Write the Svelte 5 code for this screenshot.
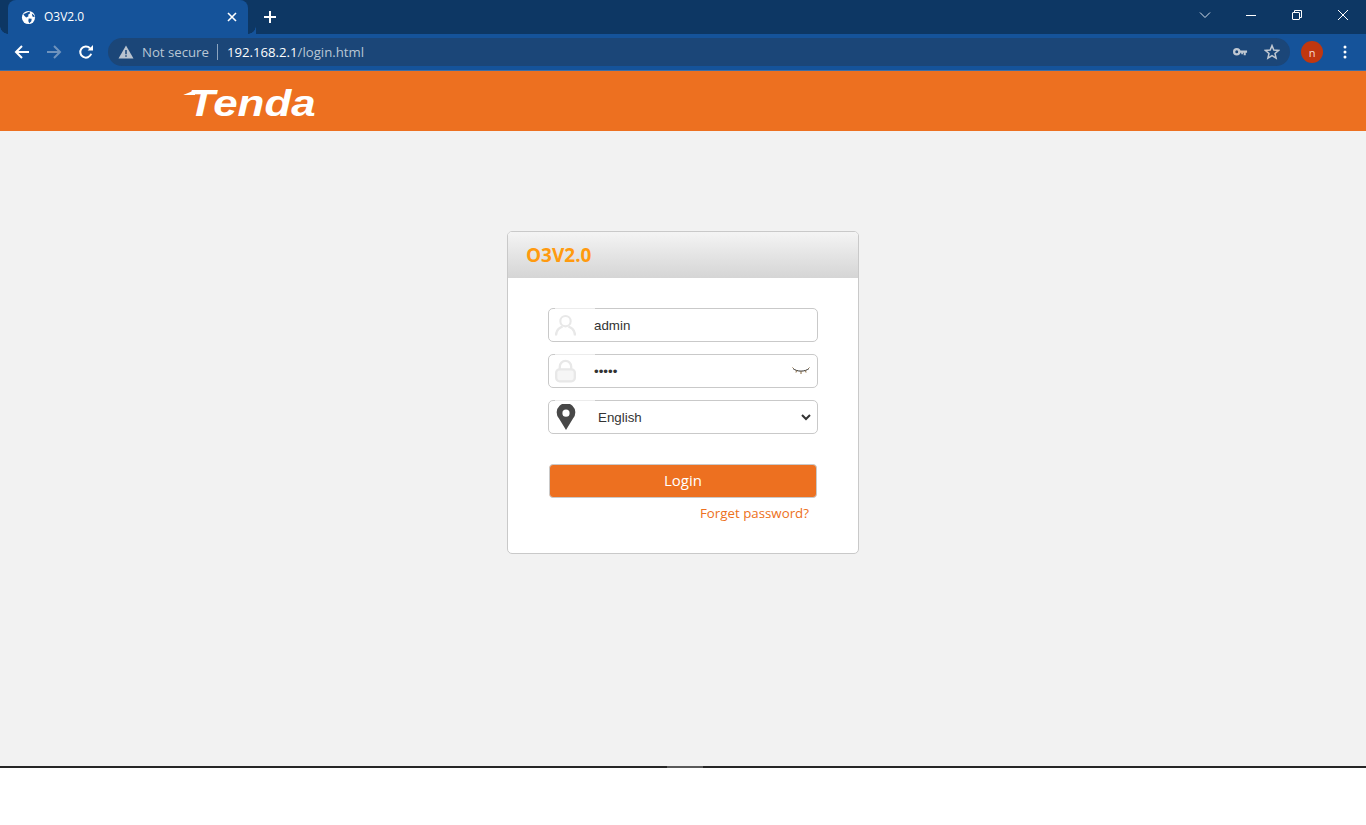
<script>
	let username = 'admin';
	let password = 'admin';
	let language = 'en';
</script>

<div class="page">
	<!-- browser chrome -->
	<div class="tabstrip">
		<div class="tab">
			<svg class="favicon" viewBox="0 0 16 16" width="16" height="16">
				<circle cx="8" cy="8" r="7" fill="#fff" />
				<path d="M2.5 4.5 L6 3 L9 1.6 L9.8 3.4 L7.6 5 L8 6.6 L5.6 8 L3.8 6.4 Z M8.2 9 L11.4 9.4 L11 12 L8.8 14.2 L7.8 11.6 Z M11.5 3.6 L14 5.6 L14.6 7.6 L12.2 6.8 Z" fill="#15539a" />
			</svg>
			<span class="tab-title">O3V2.0</span>
			<svg class="tab-close" viewBox="0 0 10 10" width="10" height="10">
				<path d="M1 1 L9 9 M9 1 L1 9" stroke="#fff" stroke-width="1.6" />
			</svg>
		</div>
		<svg class="new-tab" viewBox="0 0 12 12" width="12" height="12">
			<path d="M6 0 V12 M0 6 H12" stroke="#fff" stroke-width="2" />
		</svg>
		<div class="win-controls">
			<span class="win-btn">
				<svg viewBox="0 0 12 8" width="12" height="8"><path d="M1 1.5 L6 6.5 L11 1.5" fill="none" stroke="#d5dfea" stroke-width="1" /></svg>
			</span>
			<span class="win-btn">
				<svg viewBox="0 0 10 10" width="10" height="10"><path d="M0 5.5 H10" stroke="#fff" stroke-width="1" /></svg>
			</span>
			<span class="win-btn">
				<svg viewBox="0 0 10 10" width="10" height="10">
					<path d="M2.5 2.5 V0.5 H9.5 V7.5 H7.5" fill="none" stroke="#fff" stroke-width="1" />
					<rect x="0.5" y="2.5" width="7" height="7" rx="0.5" fill="none" stroke="#fff" stroke-width="1" />
				</svg>
			</span>
			<span class="win-btn">
				<svg viewBox="0 0 10 10" width="10" height="10"><path d="M0 0 L10 10 M10 0 L0 10" stroke="#fff" stroke-width="1" /></svg>
			</span>
		</div>
	</div>

	<div class="toolbar">
		<span class="nav-btn">
			<svg viewBox="0 0 16 16" width="16" height="16"><path d="M15 8 H2 M8 2 L2 8 L8 14" fill="none" stroke="#fff" stroke-width="2" /></svg>
		</span>
		<span class="nav-btn">
			<svg viewBox="0 0 16 16" width="16" height="16"><path d="M1 8 H14 M8 2 L14 8 L8 14" fill="none" stroke="#6f93bd" stroke-width="2" /></svg>
		</span>
		<span class="nav-btn">
			<svg viewBox="0 0 16 16" width="16" height="16">
				<path d="M13.2 9.8 A5.6 5.6 0 1 1 12 4.2" fill="none" stroke="#fff" stroke-width="2" />
				<path d="M9.6 6.4 H15 V1 Z" fill="#fff" />
			</svg>
		</span>
		<div class="omnibox">
			<svg class="warn" viewBox="0 0 16 14" width="16" height="14">
				<path d="M8 0.5 L15.5 13.5 H0.5 Z" fill="#b9c3cf" />
				<path d="M8 5 V9.2 M8 10.2 V11.8" stroke="#1b4678" stroke-width="1.5" />
			</svg>
			<span class="not-secure">Not secure</span>
			<span class="omni-sep"></span>
			<span class="url"><span class="host">192.168.2.1</span>/login.html</span>
			<svg class="key" viewBox="0 0 16 10" width="15" height="10">
				<circle cx="4" cy="4.6" r="2.8" fill="none" stroke="#c0c8d2" stroke-width="2.4" />
				<path d="M6 3.4 H15 V5.8 H13.6 V8.4 H11.4 V5.8 H10.6 V7.4 H8.8 V5.8 H6 Z" fill="#c0c8d2" />
			</svg>
			<svg class="star" viewBox="0 0 16 16" width="16" height="16">
				<path d="M8 1.6 L9.8 6 L14.6 6.4 L11 9.5 L12.1 14.2 L8 11.7 L3.9 14.2 L5 9.5 L1.4 6.4 L6.2 6 Z" fill="none" stroke="#c0c8d2" stroke-width="1.5" />
			</svg>
		</div>
		<span class="avatar">n</span>
		<svg class="kebab" viewBox="0 0 4 16" width="4" height="16">
			<circle cx="2" cy="3" r="1.5" fill="#fff" />
			<circle cx="2" cy="8" r="1.5" fill="#fff" />
			<circle cx="2" cy="13" r="1.5" fill="#fff" />
		</svg>
	</div>

	<!-- router page -->
	<header class="brand">
		<span class="logo">Tenda</span>
	</header>

	<main>
		<form class="card" on:submit|preventDefault>
			<h1>O3V2.0</h1>
			<div class="body">
				<div class="field">
					<span class="icon">
						<svg viewBox="0 0 22 22" width="22" height="22">
							<circle cx="11" cy="7" r="5.4" fill="none" stroke="#e8e8e8" stroke-width="2.2" />
							<path d="M1 22 C1 15.5 6 13 8 12.6 M21 22 C21 15.5 16 13 14 12.6" fill="none" stroke="#e8e8e8" stroke-width="2.4" />
						</svg>
					</span>
					<input type="text" bind:value={username} />
				</div>
				<div class="field">
					<span class="icon">
						<svg viewBox="0 0 22 24" width="22" height="24">
							<path d="M5 11 V7.5 A6 6 0 0 1 17 7.5 V11" fill="none" stroke="#e8e8e8" stroke-width="2.4" />
							<rect x="1.2" y="10.2" width="19.6" height="12.6" rx="3.6" fill="#f6f6f6" stroke="#e8e8e8" stroke-width="2.4" />
						</svg>
					</span>
					<input type="password" bind:value={password} />
					<svg class="eye" viewBox="0 0 18 8" width="18" height="8">
						<path d="M1 1.5 C5 5, 13 5, 17 1.5" fill="none" stroke="#33302c" stroke-width="1" />
						<path d="M1.5 1.5 L0.5 0.5 M4.5 3.6 L4 5.5 M9 4.4 V7 M13.5 3.6 L14 5.5 M16.5 1.5 L17.5 0.5" stroke="#8a6a40" stroke-width="1" />
					</svg>
				</div>
				<div class="field">
					<span class="icon">
						<svg viewBox="0 0 20 26" width="20" height="26">
							<path fill-rule="evenodd" d="M10 26 L3 14.6 A9.3 9.3 0 1 1 17 14.6 Z M10 5.6 A3.6 3.6 0 1 0 10 12.8 A3.6 3.6 0 1 0 10 5.6 Z" fill="#484848" />
						</svg>
					</span>
					<select bind:value={language}>
						<option value="en">English</option>
						<option value="cn">简体中文</option>
					</select>
				</div>
				<button type="submit">Login</button>
				<div class="forgot">Forget password?</div>
			</div>
		</form>
	</main>

	<div class="splitter"><span class="handle"></span></div>
	<div class="below"></div>
</div>

<style>
	:global(body) {
		background: #fff;
	}

	.page {
		display: flex;
		flex-direction: column;
		height: 825px;
		overflow: hidden;
		font-family: "Open Sans", "Liberation Sans", sans-serif;
	}

	.tabstrip {
		display: flex;
		align-items: flex-start;
		height: 34px;
		padding-left: 8px;
		background: #0d3764;
		flex: none;
	}

	.tab {
		position: relative;
		display: flex;
		align-items: center;
		box-sizing: border-box;
		width: 240px;
		height: 34px;
		padding: 0 11px 0 13px;
		background: #15539a;
		border-radius: 8px 8px 0 0;
		color: #fff;
	}

	.tab::before,
	.tab::after {
		content: "";
		position: absolute;
		bottom: 0;
		width: 8px;
		height: 8px;
		background: radial-gradient(circle at 0 0, #0d3764 7.5px, #15539a 8px);
	}
	.tab::before {
		left: -8px;
		transform: scaleX(-1);
	}
	.tab::after {
		right: -8px;
	}

	.favicon {
		flex: none;
		margin-right: 8px;
		width: 15px;
		height: 15px;
	}

	.tab-title {
		flex: 1;
		font-size: 12px;
		line-height: 34px;
	}

	.new-tab {
		margin: 11px 0 0 16px;
	}

	.win-controls {
		display: flex;
		margin-left: auto;
	}

	.win-btn {
		display: flex;
		align-items: center;
		justify-content: center;
		width: 46px;
		height: 29px;
	}

	.toolbar {
		display: flex;
		align-items: center;
		box-sizing: border-box;
		height: 37px;
		padding: 4px 0 4px 6px;
		background: #15539a;
		border-bottom: 1px solid #3d6ea6;
		flex: none;
	}

	.nav-btn {
		display: flex;
		align-items: center;
		justify-content: center;
		width: 32px;
		height: 28px;
	}

	.omnibox {
		display: flex;
		align-items: center;
		box-sizing: border-box;
		width: 1182px;
		height: 28px;
		margin-left: 6px;
		padding: 0 10px;
		background: #1b4678;
		border-radius: 14px;
		color: #b9c6d5;
	}

	.warn {
		margin-right: 8px;
	}

	.not-secure {
		font-size: 13.2px;
	}

	.omni-sep {
		width: 1px;
		height: 16px;
		margin: 0 9px 0 8px;
		background: #8ca4bf;
	}

	.url {
		flex: 1;
		font-size: 13.2px;
	}

	.host {
		color: #fff;
	}

	.key {
		margin-right: 16px;
	}

	.avatar {
		display: flex;
		align-items: center;
		justify-content: center;
		width: 22px;
		height: 22px;
		margin-left: 11px;
		border-radius: 50%;
		background: #c1370f;
		color: #f3dcd2;
		font-size: 11px;
	}

	.kebab {
		margin-left: 20px;
	}

	.brand {
		box-sizing: border-box;
		height: 60px;
		padding: 6px 0 0 188px;
		background: #ed7020;
		flex: none;
	}

	.logo {
		position: relative;
		display: inline-block;
		font-family: "Liberation Sans", sans-serif;
		font-style: italic;
		font-weight: 700;
		font-size: 36px;
		line-height: 54px;
		color: #fff;
		transform: scaleX(1.22);
		transform-origin: left center;
	}

	/* swoosh on the T's bar */
	.logo::before {
		content: "";
		position: absolute;
		left: -4px;
		top: 13px;
		width: 10px;
		height: 5px;
		background: #fff;
		clip-path: polygon(0 100%, 100% 0, 100% 100%);
	}

	main {
		flex: 1;
		padding-top: 100px;
		background: #f2f2f2;
	}

	.card {
		box-sizing: border-box;
		width: 352px;
		height: 323px;
		margin: 0 auto;
		background: #fff;
		border: 1px solid #c9c9c9;
		border-radius: 5px;
		overflow: hidden;
	}

	h1 {
		height: 46px;
		margin: 0;
		padding-left: 18px;
		font-size: 19px;
		font-weight: 700;
		line-height: 46px;
		color: #ff9a0f;
		background: linear-gradient(#f4f4f4, #d5d5d5);
	}

	.body {
		display: flex;
		flex-direction: column;
		padding: 30px 40px 0;
	}

	.field {
		position: relative;
		display: flex;
		align-items: center;
		box-sizing: border-box;
		height: 34px;
		margin-bottom: 12px;
		padding-left: 45px;
		border: 1px solid #c9c9c9;
		border-radius: 5px;
	}

	.icon {
		position: absolute;
		left: 6px;
		top: -1px;
		display: flex;
		align-items: center;
		justify-content: center;
		box-sizing: border-box;
		width: 40px;
		height: 34px;
		padding: 0 19px 2px 0;
		border-top: 1px solid #ececec;
	}

	input,
	select {
		flex: 1;
		min-width: 0;
		border: 0;
		outline: 0;
		background: transparent;
		font-family: "Liberation Sans", sans-serif;
		font-size: 13.333px;
		color: #333;
	}

	input {
		padding: 0;
	}

	select {
		height: 30px;
		padding-left: 0;
		margin-right: 3px;
	}

	.eye {
		position: absolute;
		right: 7px;
		top: 12px;
	}

	button {
		height: 34px;
		margin: 18px 1px 0;
		padding: 0 0 2px;
		background: #ed7020;
		border: 1px solid #c9c9c9;
		border-radius: 4px;
		font-family: inherit;
		font-size: 15px;
		color: #fff;
	}

	.forgot {
		margin: 6px 9px 0 0;
		text-align: right;
		font-size: 13.3px;
		line-height: 18px;
		color: #ed7020;
	}

	.splitter {
		display: flex;
		justify-content: center;
		height: 2px;
		padding-left: 4px;
		background: #262626;
		flex: none;
	}

	.handle {
		width: 36px;
		background: #5a5a5a;
	}

	.below {
		height: 57px;
		background: #fff;
		flex: none;
	}
</style>
